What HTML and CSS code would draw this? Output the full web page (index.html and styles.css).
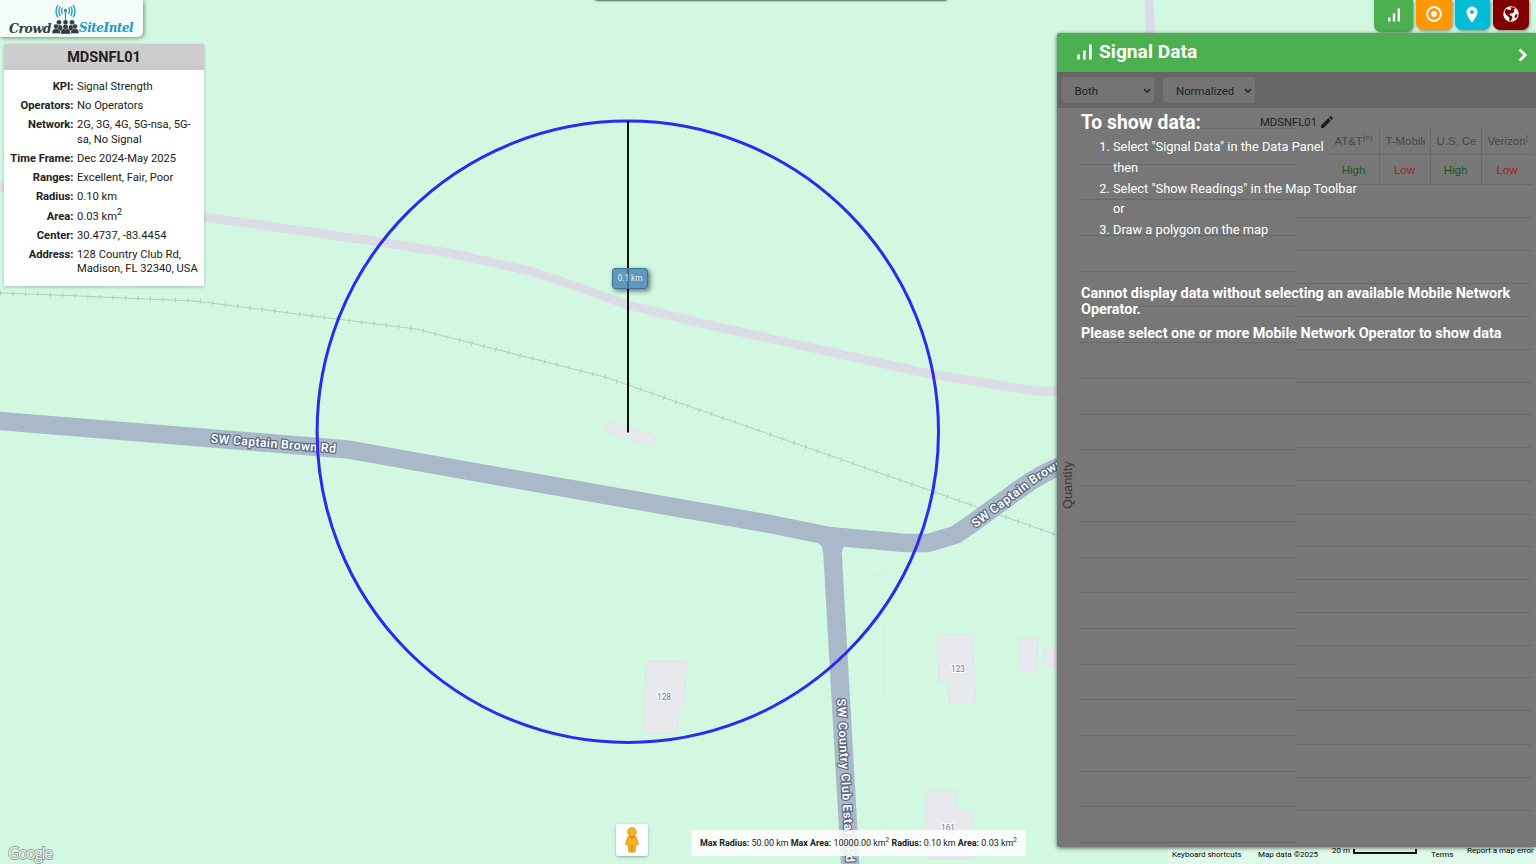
FILE: index.html
```
<!DOCTYPE html>
<html lang="en">
<head>
<meta charset="utf-8">
<title>Crowd SiteIntel</title>
<link rel="stylesheet" href="styles.css">
</head>
<body>
<main class="app">
  <svg class="map" viewBox="0 0 1536 864" width="1536" height="864">
    <g class="parcel">
      <path d="M570 545V864M882 560L888 864M888 743H1057M864 574L905 577L1000 617"/>
    </g>
    <g class="building">
      <path d="M608 421L656 436L653 447L605 431Z"/>
      <path d="M646 661H687L684 704L679 708L677 733H643Z"/>
      <path d="M937 635H972L976 704H949V682H939Z"/>
      <path d="M1020 637L1038 638L1036 673L1019 671Z"/>
      <path d="M1045 648L1060 651V669L1044 665Z"/>
      <path d="M926 791H956V811L972 812V859H926Z"/>
    </g>
    <path class="path-road" d="M-5 186L204 217L380 242L450 253L530 271L575 286L628 305L700 323L930 374L1035 391L1062 391"/>
    <path class="path-road" d="M1149 -2L1151 40"/>
    <path class="rail" d="M0 293L55 295L195 301L416 329L605 377L700 410L1057 535"/>
    <path class="rail-ties" d="M0 293L55 295L195 301L416 329L605 377L700 410L1057 535"/>
    <path class="road" d="M-5 420.5L348 449.500L480 473L770 524L829 536L905 543H928L955 535L970 525L1021 488Q1040 474 1065 464"/>
    <path class="road" d="M831.500 535L850.500 870"/>
    <path class="corner" d="M816 542Q822 544 823 552H832V540ZM842 552Q842 546 849 545L835 540V552Z"/>
    <path id="street-a" d="M210.500 442.500L338 453" fill="none"/>
    <path id="street-b" d="M975.500 528L1025 490.500Q1040 478 1074 460" fill="none"/>
    <path id="street-c" d="M837 699L847 880" fill="none"/>
    <g class="street">
      <text><textPath href="#street-a" textLength="126">SW Captain Brown Rd</textPath></text>
      <text><textPath href="#street-b">SW Captain Brown</textPath></text>
      <text><textPath href="#street-c" textLength="164">SW Country Club Estate Rd</textPath></text>
    </g>
    <g class="house-no">
      <text x="664" y="700">128</text>
      <text x="958" y="672">123</text>
      <text x="948" y="831">161</text>
    </g>
    <circle class="radius-ring" cx="627.800" cy="431.800" r="310.700"/>
    <path class="radius-line" d="M628 121V432.500"/>
    <text class="google" x="8" y="858.500" textLength="45">Google</text>
  </svg>

  <div class="radius-tag">0.1 km</div>
  <div class="search-edge"></div>

  <div class="logo">
    <span class="logo-crowd">Crowd</span>
    <svg class="logo-mark" width="27" height="31" viewBox="0 0 27 31">
      <g fill="none" stroke="#2196d3" stroke-width="1.300">
        <path d="M13.500 6V17M10.500 3.500Q8.500 6.500 10.500 10M16.500 3.500Q18.500 6.500 16.500 10M8.300 2.500Q5.500 7 8.300 12M18.700 2.500Q21.500 7 18.700 12M6 1Q2 7 6 13.500M21 1Q25 7 21 13.500"/>
      </g>
      <circle cx="13.500" cy="6.500" r="1.700" fill="#2196d3"/>
      <g fill="#333b42" stroke="#f3fbf6" stroke-width=".4">
        <path d="M3.500 22.500Q4 20.800 7 20.800T10.500 22.500V27H3.500ZM16.500 22.500Q17 20.800 20 20.800T23.500 22.500V27H16.500Z"/>
        <circle cx="7" cy="18.300" r="2.500"/><circle cx="13.500" cy="18.300" r="2.500"/><circle cx="20" cy="18.300" r="2.500"/>
        <path d="M0 29.500Q0 24.500 4 24.500T8.500 29.500ZM18.500 29.500Q19 24.500 23 24.500T27 29.500ZM8.500 30Q8.500 24 13.500 24T18.500 30Z"/>
        <circle cx="4" cy="22.500" r="2.400"/><circle cx="23" cy="22.500" r="2.400"/><circle cx="13.500" cy="22.800" r="2.600"/>
      </g>
    </svg>
    <span class="logo-intel">SiteIntel</span>
  </div>

  <section class="info">
    <h1>MDSNFL01</h1>
    <dl>
      <dt>KPI:</dt><dd>Signal Strength</dd>
      <dt>Operators:</dt><dd>No Operators</dd>
      <dt>Network:</dt><dd>2G, 3G, 4G, 5G-nsa, 5G-<br>sa, No Signal</dd>
      <dt>Time Frame:</dt><dd>Dec 2024-May 2025</dd>
      <dt>Ranges:</dt><dd>Excellent, Fair, Poor</dd>
      <dt>Radius:</dt><dd>0.10 km</dd>
      <dt>Area:</dt><dd>0.03 km<sup>2</sup></dd>
      <dt>Center:</dt><dd>30.4737, -83.4454</dd>
      <dt>Address:</dt><dd>128 Country Club Rd,<br>Madison, FL 32340, USA</dd>
    </dl>
  </section>

  <div class="pegman">
    <svg width="16" height="26" viewBox="0 0 16 26">
      <path d="M4 9.500H12L14.500 17L12.500 18L11.800 17.500L11 25H5L4.200 17.500L3.500 18L1.500 17Z" fill="#fbb31c" stroke="#d58b18" stroke-width=".8"/>
      <path d="M8 18V25" stroke="#c8791b"/>
      <path d="M5 9.500L8 12L11 9.500Z" fill="#e5701e"/>
      <circle cx="8" cy="5" r="4.300" fill="#fbb31c" stroke="#d58b18" stroke-width=".8"/>
    </svg>
  </div>

  <div class="stats"><b>Max Radius:</b> 50.00 km <b>Max Area:</b> 10000.00 km<sup>2</sup> <b>Radius:</b> 0.10 km <b>Area:</b> 0.03 km<sup>2</sup></div>

  <footer class="credits">
    <span class="keys">Keyboard shortcuts</span>
    <span class="data">Map data ©2025</span>
    <span class="scale">20 m <i></i></span>
    <span class="terms">Terms</span>
    <span class="report">Report a map error</span>
  </footer>

  <nav class="tabs">
    <a class="tab tab-signal"><svg width="14" height="14" viewBox="0 0 14 14"><path d="M1 9.500H3.400V13.500H1ZM5.800 5.500H8.200V13.500H5.800ZM10.600 .5H13V13.500H10.600Z" fill="#fff"/></svg></a>
    <a class="tab tab-target"><svg width="18" height="18" viewBox="0 0 18 18"><circle cx="9" cy="9" r="6.900" fill="none" stroke="#fff" stroke-width="2"/><circle cx="9" cy="9" r="2.900" fill="#fff"/></svg></a>
    <a class="tab tab-place"><svg width="12" height="17" viewBox="0 0 12 17"><path fill="#fff" fill-rule="evenodd" d="M6 .5A5.500 5.500 0 0 0 .5 6C.5 10 6 16.500 6 16.500S11.500 10 11.500 6A5.500 5.500 0 0 0 6 .5ZM6 4A2 2 0 1 1 6 8A2 2 0 1 1 6 4Z"/></svg></a>
    <a class="tab tab-world"><svg width="18" height="18" viewBox="0 0 18 18"><circle cx="9" cy="9" r="7.700" fill="#fff"/><path d="M8.500 2L12 2.500L13.500 4L11.500 4.500L12.500 6L10.500 8.500L8 8.500L7.500 10L10 11L10.500 13L8.800 16L7.300 15.800V12.500L3.800 9.500L2.500 6.500L4.500 3.800L7 5L9.500 4.300ZM13.500 9.500L15.500 9L15 12L13 13.500L12.500 11.500Z" fill="#800000"/></svg></a>
  </nav>

  <aside class="panel">
    <header class="panel-head">
      <svg width="16" height="17" viewBox="0 0 16 17"><path d="M.3 10.500H2.900V15.500H.3ZM6.100 6.500H8.700V15.500H6.100ZM12 .5H14.700V15.500H12Z" fill="#fff"/></svg>
      <h2>Signal Data</h2>
      <svg class="chevron" width="10" height="14" viewBox="0 0 10 14"><path d="M1.500 1.500L7.300 7L1.500 12.500" fill="none" stroke="#fff" stroke-width="2.600"/></svg>
    </header>
    <div class="filters">
      <div class="select">Both <svg width="8" height="6" viewBox="0 0 8 6"><path d="M1 1L4 4.200L7 1" fill="none" stroke="#222" stroke-width="1.600"/></svg></div>
      <div class="select">Normalized <svg width="8" height="6" viewBox="0 0 8 6"><path d="M1 1L4 4.200L7 1" fill="none" stroke="#222" stroke-width="1.600"/></svg></div>
    </div>
    <div class="panel-body">
      <span class="axis">Quantity</span>
      <svg class="lines" width="216" height="739" viewBox="0 108 216 739">
        <path d="M0 128.500H216M0 164.500H216M0 199.500H216M0 235.500H216M0 271.500H216M0 306.500H216M0 342.500H216M0 378.500H216M0 414.500H216M0 449.500H216M0 485.500H216M0 521.500H216M0 557.500H216M0 592.500H216M0 628.500H216M0 664.500H216M0 699.500H216M0 735.500H216M0 771.500H216M0 806.500H216M0 842.500H216"/>
      </svg>
      <svg class="lines" width="236" height="739" viewBox="0 108 236 739">
        <path d="M0 217.500H236M0 250.500H236M0 283.500H236M0 316.500H236M0 349.500H236M0 382.500H236M0 414.500H236M0 447.500H236M0 480.500H236M0 514.500H236M0 546.500H236M0 579.500H236M0 612.500H236M0 645.500H236M0 677.500H236M0 710.500H236M0 744.500H236M0 777.500H236M0 810.500H236"/>
      </svg>
      <div class="site">MDSNFL01 <svg width="12" height="12" viewBox="0 0 12 12"><path d="M0 9.500L7.300 2.200L9.800 4.700L2.500 12H0ZM8 1.500L9.300 .3Q9.700 0 10.200 .4L11.600 1.800Q12 2.200 11.700 2.700L10.500 4Z" fill="#1c1c1c"/></svg></div>
      <div class="grades">
        <div><span>AT&amp;T<sup>(n)</sup></span></div><div><span>T-Mobile</span></div><div><span>U.S. Ce</span></div><div><span>Verizon<sup>(</sup></span></div>
        <b class="high">High</b><b class="low">Low</b><b class="high">High</b><b class="low">Low</b>
      </div>
      <div class="notice">
        <h3>To show data:</h3>
        <ol>
          <li>Select "Signal Data" in the Data Panel<br>then</li>
          <li>Select "Show Readings" in the Map Toolbar<br>or</li>
          <li>Draw a polygon on the map</li>
        </ol>
        <p>Cannot display data without selecting an available Mobile Network Operator.</p>
        <p>Please select one or more Mobile Network Operator to show data</p>
      </div>
    </div>
  </aside>
</main>
</body>
</html>
```
FILE: styles.css
```
* { box-sizing: border-box; }
body { margin: 0; font-family: Roboto, "Liberation Sans", sans-serif; color: #212121; }
.app { position: relative; width: 1536px; height: 864px; overflow: hidden; background: #d3f8e2; }
.map { display: block; }
.parcel { fill: none; stroke: #d6efe2; stroke-width: 1; }
.building { fill: #e8e9ed; stroke: #e0dce6; stroke-width: .6; }
.path-road { fill: none; stroke: #dcdce7; stroke-width: 9; stroke-linejoin: round; }
.rail { fill: none; stroke: #b8cbc2; stroke-width: 1; }
.rail-ties { fill: none; stroke: #b8cbc2; stroke-width: 5; stroke-dasharray: 1 11.500; }
.road { fill: none; stroke: #aab9c9; stroke-width: 18.500; stroke-linejoin: round; }
.corner { fill: #aab9c9; }
.street { font-size: 12.200px; font-weight: 600; letter-spacing: .5px; fill: #fff; stroke: #5b6b80; stroke-width: 2.500px; paint-order: stroke; stroke-linejoin: round; }
.house-no { font-size: 8.400px; text-anchor: middle; fill: #68778a; stroke: #fff; stroke-width: 2px; paint-order: stroke; }
.radius-ring { fill: none; stroke: #2a2af0; stroke-width: 3; }
.radius-line { stroke: #111; stroke-width: 2; }
.google { font: 500 16px "Open Sans", sans-serif; fill: #e6f5ed; stroke: #93a29b; stroke-width: 1.800px; paint-order: stroke; }

.radius-tag { position: absolute; left: 612px; top: 268px; width: 36px; height: 21px; border: 1px solid #3d7199; border-radius: 3px; background: rgba(70, 130, 180, .82); box-shadow: 2px 2px 5px rgba(0, 0, 0, .55); color: rgba(255, 255, 255, .85); font-size: 8.200px; line-height: 19px; text-align: center; }
.search-edge { position: absolute; left: 594px; top: -8px; width: 354px; height: 8px; border-radius: 4px; box-shadow: 0 1px 2px rgba(0, 0, 0, .6); background: #fff; }

.logo { position: absolute; left: 0; top: 0; width: 143px; height: 37px; padding: 4px 0 0 9px; display: flex; align-items: flex-start; background: #f1fdf6; border-radius: 0 0 5px 0; box-shadow: 1px 1px 4px rgba(0, 0, 0, .45); font: italic bold 13.200px/20px "DejaVu Serif Condensed", "DejaVu Serif", serif; }
.logo-crowd, .logo-intel { padding-top: 14px; font-stretch: condensed; letter-spacing: -.4px; }
.logo-crowd { width: 43px; font-size: 13.800px; color: #333b42; }
.logo-intel { color: #2196d3; }

.info { position: absolute; left: 4px; top: 44px; width: 200px; height: 242px; background: #fff; box-shadow: 0 1px 3px rgba(0, 0, 0, .25); }
.info h1 { margin: 0; height: 26px; background: #ccc; font-size: 14.500px; line-height: 27px; font-weight: 700; text-align: center; }
.info dl { display: grid; grid-template-columns: 69.500px 1fr; column-gap: 3.500px; row-gap: 4.800px; margin: 10px 0 0; font-size: 11.200px; line-height: 14.400px; white-space: nowrap; }
.info dt { font-weight: 700; text-align: right; }
.info dd { margin: 0; }
.info sup { line-height: 0; font-size: 9px; }

.pegman { position: absolute; left: 616px; top: 824px; width: 32px; height: 32px; display: flex; align-items: center; justify-content: center; background: #fff; border-radius: 2px; box-shadow: 0 1px 3px rgba(0, 0, 0, .3); }
.stats { position: absolute; left: 691px; top: 830px; width: 335px; height: 26px; padding-left: 9px; background: rgba(255, 255, 255, .85); font-size: 8.940px; line-height: 26px; white-space: nowrap; }
.stats sup { font-size: 6.500px; line-height: 0; }

.credits { position: absolute; left: 1168px; top: 843px; width: 368px; height: 21px; display: flex; align-items: flex-start; background: rgba(245, 255, 250, .35); color: #000; font-size: 8px; line-height: 12px; white-space: nowrap; }
.keys { width: 90px; padding: 6px 0 0 4px; }
.data { width: 74px; padding-top: 6px; }
.scale { width: 99px; padding-top: 1.500px; display: flex; gap: 3px; }
.scale i { width: 64px; height: 5px; margin-top: 4px; border: 2px solid #111; border-top: 0; }
.terms { width: 36px; padding-top: 6px; }
.report { padding-top: 2px; }

.tabs { position: absolute; left: 1374px; top: 0; display: flex; gap: 3px; }
.tab { width: 35.500px; height: 30px; display: flex; align-items: center; justify-content: center; border-radius: 0 0 7px 7px; box-shadow: 1px 1px 3px rgba(0, 0, 0, .4); padding-bottom: 2px; }
.tab-signal { width: 39px; height: 32px; background: #4caf50; padding-bottom: 3px; }
.tab-target { background: #ff9800; }
.tab-place { background: #00bcd4; }
.tab-world { background: #800000; }

.panel { position: absolute; left: 1057px; top: 33px; width: 479px; height: 814px; display: flex; flex-direction: column; background: #777; border-radius: 3px 0 0 3px; box-shadow: 0 1px 4px rgba(0, 0, 0, .6); overflow: hidden; }
.panel-head { height: 39px; display: flex; align-items: center; padding: 0 8px 0 20px; background: #4caf50; color: #fff; }
.panel-head h2 { margin: 0 0 2px 6px; font-size: 19.200px; line-height: 37px; font-weight: 700; }
.chevron { margin: 4px 0 0 auto; }
.filters { height: 36px; display: flex; align-items: center; gap: 9.500px; padding-left: 4.500px; background: #666; }
.select { width: 92px; height: 26px; display: flex; align-items: center; justify-content: space-between; padding: 1px 3px 0 13px; border-radius: 2px; background: #747474; font-size: 11.400px; color: #222; }
.panel-body { position: relative; height: 739px; display: flex; }
.axis { width: 23px; height: 48px; margin-top: 353px; writing-mode: vertical-rl; transform: rotate(180deg); font: 12.800px/26px "Liberation Sans", sans-serif; color: #3a3a3a; white-space: nowrap; text-indent: 0; position: relative; left: -2px; }
.lines { fill: none; stroke: #686868; stroke-width: 1; }
.site { position: absolute; left: 203px; top: 6px; display: flex; align-items: center; gap: 4px; font-size: 11.300px; line-height: 17px; color: #222; }
.site svg { margin-bottom: 2px; }
.grades { position: absolute; left: 271.500px; top: 20px; width: 204px; display: grid; grid-template-columns: repeat(4, 51px); grid-template-rows: 27px 30px; background: #777; font: 11.400px "Liberation Sans", sans-serif; }
.grades > * { border-right: 1px solid #696969; border-bottom: 1px solid #696969; font-weight: 400; }
.grades > :nth-child(4n) { border-right: 0; }
.grades div { padding: 0 5px 0 6px; line-height: 26px; color: #484848; }
.grades span { display: block; overflow: hidden; white-space: nowrap; }
.grades sup { font-size: 8px; line-height: 0; }
.grades b { text-align: center; line-height: 30px; font-size: 11.500px; }
.grades .high { color: #1b5a1e; }
.grades .low { color: #9c2420; }
.notice { position: absolute; left: 24px; top: 1px; width: 450px; color: #fff; }
.notice h3 { margin: 2px 0; font-size: 19.300px; line-height: 24px; font-weight: 700; }
.notice ol { margin: 0 0 44px; padding-left: 32px; font-size: 12.830px; line-height: 20.800px; }
.notice p { margin: 0 0 8px; font-size: 14.420px; line-height: 16px; font-weight: 700; }
.notice ol + p { padding-top: 1px; }
```
